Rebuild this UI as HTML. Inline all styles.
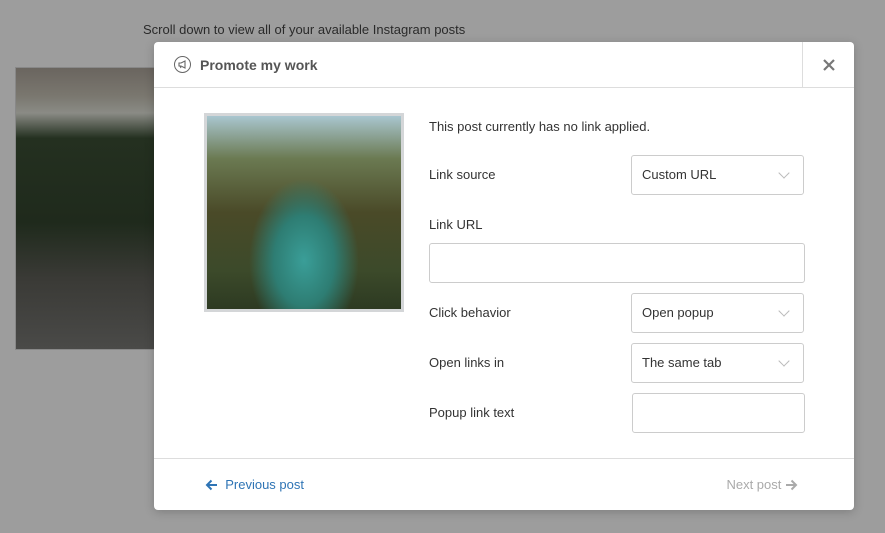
<!DOCTYPE html>
<html><head><style>
*{box-sizing:border-box;margin:0;padding:0}
body{width:885px;height:533px;overflow:hidden;background:#9d9d9d;font-family:"Liberation Sans",sans-serif;position:relative;font-size:13px;color:#333}
.scroll{position:absolute;left:143px;top:22px;color:#2a2a2a;font-size:13px}
.bg{position:absolute;left:15px;top:67px;width:145px;height:283px;border:1px solid #888;background:linear-gradient(180deg,#6a655f 0%,#7a776f 10%,#8a8b85 16%,#243020 25%,#1f2a1c 55%,#3a3a36 75%,#4a4a48 100%)}
.modal{position:absolute;left:154px;top:42px;width:700px;height:468px;background:#fff;border-radius:4px;box-shadow:0 2px 10px rgba(0,0,0,.2)}
.hdr{height:46px;border-bottom:1px solid #ddd;position:relative}
.hdr .t{position:absolute;left:46px;top:15px;font-weight:bold;font-size:14px;color:#555}
.ic{position:absolute;left:20px;top:14px;width:17px;height:17px;border:1.3px solid #666;border-radius:50%}
.x{position:absolute;left:648px;top:0;width:52px;height:45px;border-left:1px solid #ddd}
.img{position:absolute;left:50px;top:71px;width:200px;height:199px;border:3px solid #d4d6d8;background:radial-gradient(ellipse at 50% 75%,#3a9e98 0%,#2e7d73 22%,transparent 40%),linear-gradient(180deg,#a9c6cf 0%,#6b7a52 22%,#4a4a28 50%,#3c4a2a 80%,#2d3a22 100%)}
.lbl{position:absolute;left:275px;font-size:13px;color:#333}
.sel,.inp{position:absolute;border:1px solid #ccc;border-radius:3px;background:#fff;font-size:13px;color:#333;padding-left:10px}
.sel{left:477px;width:173px;height:40px;line-height:38px}
.sel:after{content:"";position:absolute;right:15px;top:13px;width:7px;height:7px;border-right:1.5px solid #bbb;border-bottom:1.5px solid #bbb;transform:rotate(45deg)}
.ftr{position:absolute;left:0;top:416px;width:700px;border-top:1px solid #ddd;height:52px}
.prev{position:absolute;left:51px;top:18px;color:#2e74b5;font-size:13px}
.next{position:absolute;right:56px;top:18px;color:#aaa;font-size:13px}
svg{vertical-align:-2px}
</style></head><body>
<div class="scroll">Scroll down to view all of your available Instagram posts</div>
<div class="bg"></div>
<div class="modal">
<div class="hdr"><div class="ic"><svg width="15" height="15" viewBox="0 0 15 15" style="position:absolute;left:0;top:0"><path d="M4 6h2l4-2v7l-4-2H4z M5 9l1 2" fill="none" stroke="#666" stroke-width="1.1"/></svg></div><div class="t">Promote my work</div><div class="x"><svg width="12" height="12" viewBox="0 0 12 12" style="position:absolute;left:20px;top:17px"><path d="M1 1L11 11M11 1L1 11" stroke="#777" stroke-width="2.2"/></svg></div></div>
<div class="img"></div>
<div class="lbl" style="top:77px">This post currently has no link applied.</div>
<div class="lbl" style="top:125px">Link source</div>
<div class="sel" style="top:113px">Custom URL</div>
<div class="lbl" style="top:175px">Link URL</div>
<div class="inp" style="left:275px;top:201px;width:376px;height:40px"></div>
<div class="lbl" style="top:263px">Click behavior</div>
<div class="sel" style="top:251px">Open popup</div>
<div class="lbl" style="top:313px">Open links in</div>
<div class="sel" style="top:301px">The same tab</div>
<div class="lbl" style="top:363px">Popup link text</div>
<div class="inp" style="left:478px;top:351px;width:173px;height:40px"></div>
<div class="ftr"><div class="prev"><svg width="13" height="12" viewBox="0 0 13 12"><path d="M12 6H2M6.5 1.5L2 6l4.5 4.5" fill="none" stroke="#2e74b5" stroke-width="2"/></svg>&nbsp; Previous post</div><div class="next">Next post <svg width="13" height="12" viewBox="0 0 13 12"><path d="M1 6h10M6.5 1.5L11 6l-4.5 4.5" fill="none" stroke="#aaa" stroke-width="2"/></svg></div></div>
</div>
</body></html>
